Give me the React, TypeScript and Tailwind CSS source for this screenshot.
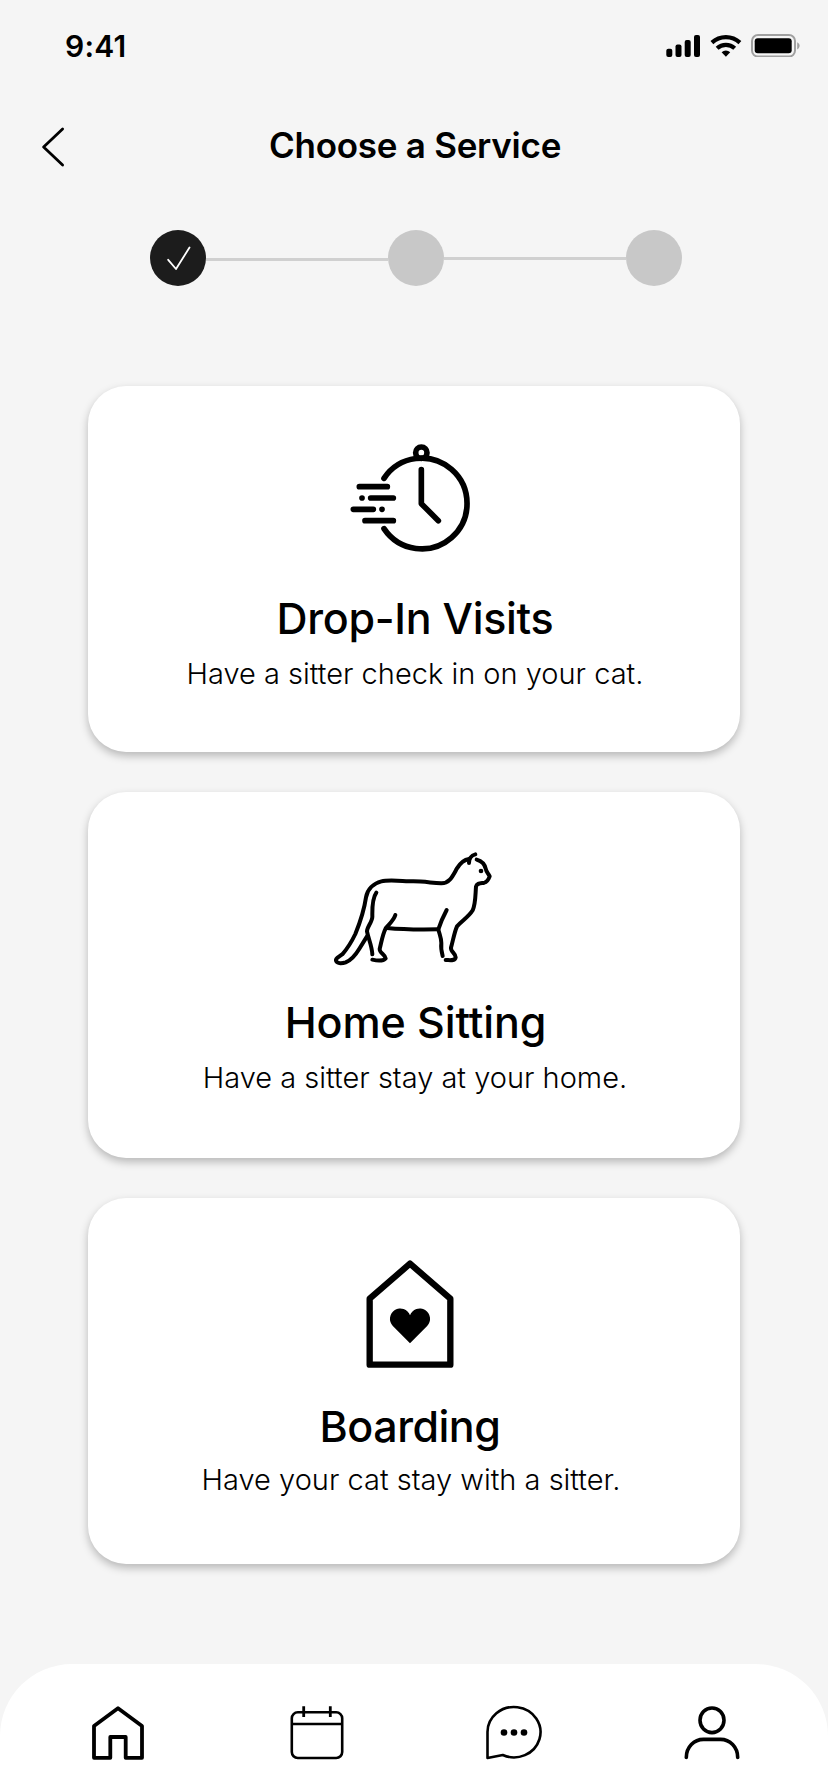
import React from "react";

const StatusBar = () => {
  return (
    <div className="flex h-[92px] items-start justify-between pl-[65px] pr-7">
      <span className="mt-7 text-[30px] leading-9 font-semibold tracking-[0.2px]">
        9:41
      </span>
      <div className="mt-[33px] flex items-start">
        <svg viewBox="0 0 35 24" className="h-6 w-[35px]" fill="currentColor">
          <rect x="0.3" y="15.7" width="6" height="8.3" rx="2" />
          <rect x="9.5" y="11.5" width="6" height="12.5" rx="2" />
          <rect x="18.7" y="7" width="6" height="17" rx="2" />
          <rect x="28" y="2" width="6" height="22" rx="2" />
        </svg>
        <svg
          viewBox="0 0 32 24"
          className="ml-[9px] h-6 w-8"
          fill="none"
          stroke="currentColor"
          strokeWidth="4.2"
        >
          <path d="M1.9 9.6a20.6 20.6 0 0 1 28 0" />
          <path d="M7.1 15.2a13.2 13.2 0 0 1 17.6 0" />
          <path
            d="M11.6 19.2a6.6 6.6 0 0 1 8.6 0L15.9 23.8z"
            fill="currentColor"
            stroke="none"
          />
        </svg>
        <svg viewBox="0 0 50 24" className="ml-2 h-6 w-[50px]">
          <rect
            x="2"
            y="2"
            width="43"
            height="21.6"
            rx="6"
            fill="none"
            stroke="#a0a0a0"
            strokeWidth="2"
          />
          <rect x="4.7" y="5.3" width="37" height="15" rx="3" />
          <path d="M47.2 9.2c3.2 1.5 3.2 5.7 0 7.4z" fill="#a0a0a0" />
        </svg>
      </div>
    </div>
  );
};

const Header = () => {
  return (
    <header className="flex h-[110px] items-center pl-10">
      <svg
        viewBox="0 0 27 42"
        className="h-[42px] w-[27px]"
        fill="none"
        stroke="currentColor"
        strokeWidth="2.8"
        strokeLinecap="round"
        strokeLinejoin="round"
      >
        <path d="M22.6 3L3.6 21l19 18" />
      </svg>
      <h1 className="mb-[5px] flex-1 pr-[65px] text-center text-[35px] leading-[44px] font-semibold tracking-[-0.25px]">
        Choose a Service
      </h1>
    </header>
  );
};

const Steps = () => {
  return (
    <div className="mt-7 flex h-14 items-center pl-[150px]">
      <div className="flex h-14 w-14 items-center justify-center rounded-full bg-[#1c1c1c]">
        <svg
          viewBox="0 0 28 28"
          className="h-7 w-7"
          fill="none"
          stroke="white"
          strokeWidth="1.8"
          strokeLinecap="round"
          strokeLinejoin="round"
        >
          <path d="M4.2 15.8L12 25 25.5 3.5" />
        </svg>
      </div>
      <div className="mt-0.5 h-[3px] w-[182px] bg-[#d0d0d0]" />
      <div className="h-14 w-14 rounded-full bg-[#c8c8c8]" />
      <div className="h-[3px] w-[182px] bg-[#d0d0d0]" />
      <div className="h-14 w-14 rounded-full bg-[#c8c8c8]" />
    </div>
  );
};

const ClockIcon = () => {
  return (
    <svg
      viewBox="0 0 540 450"
      className="mt-[34px] mr-2 h-[150px] w-[180px]"
      fill="none"
      stroke="currentColor"
      strokeWidth="17"
      strokeLinecap="round"
      strokeLinejoin="round"
    >
      <path d="M192 175A136 136 0 1 1 192 326" />
      <circle cx="304" cy="98" r="17" />
      <path d="M304 149V251L355 302" />
      <path d="M118 200H202M126 234H126.1M152 234H220M100 268H160M186 268H186.1M135 302H220" />
    </svg>
  );
};

const CatIcon = () => {
  return (
    <svg
      viewBox="0 0 570 450"
      className="mt-[43px] ml-0.5 h-[150px] w-[190px]"
      fill="none"
      stroke="currentColor"
      strokeWidth="12"
      strokeLinecap="round"
      strokeLinejoin="round"
    >
      <path d="M447 84C447 73 453 61 466 58" />
      <path d="M447 72C428 75 419 87 411 100C399 121 389 146 363 145C332 143 309 139 280 139C250 139 208 133 184 139C160 145 142 163 138 187C132 228 117 270 106 297C95 320 80 343 67 358C58 366 46 367 48 377C52 388 69 385 77 382C94 375 109 356 118 341L141 304" />
      <path d="M470 74C484 78 494 87 497 101C499 111 505 115 509 124C506 132 502 141 493 143C481 145 470 144 468 155C466 180 467 207 458 226C446 246 426 257 411 274C403 292 399 317 393 338C391 350 407 355 407 367C405 379 389 375 377 375" />
      <path d="M169 173C155 193 157 222 157 245C157 260 141 276 141 289C145 311 156 333 157 358" />
      <path d="M226 240C221 257 207 267 197 280C187 300 184 323 179 342C178 354 196 359 197 370C190 378 170 377 157 374" />
      <path d="M201 279C252 284 304 284 355 283" />
      <path d="M380 225C371 242 361 264 355 283C359 300 364 309 364 324C362 340 365 351 368 363" />
      <circle cx="483" cy="108" r="7" fill="currentColor" stroke="none" />
    </svg>
  );
};

const HouseIcon = () => {
  return (
    <svg
      viewBox="0 0 450 450"
      className="mt-[42px] ml-0.5 h-[150px] w-[150px]"
      fill="none"
      stroke="currentColor"
      strokeWidth="19"
      strokeLinejoin="round"
    >
      <path d="M210 71L331 176V374H89V176z" />
      <path
        d="M210 310L158.5 258A31 31 0 1 1 210 226A31 31 0 1 1 261.5 258z"
        fill="currentColor"
        stroke="none"
      />
    </svg>
  );
};

const Card = ({ children }: { children: React.ReactNode }) => {
  return (
    <button className="flex h-[366px] w-[652px] flex-col items-center rounded-[38px] bg-white shadow-[0_4px_8px_rgba(0,0,0,0.25)]">
      {children}
    </button>
  );
};

const NavBar = () => {
  return (
    <nav className="mt-[100px] flex h-32 items-start rounded-t-[72px] bg-white pt-10 pl-[90px]">
      <svg
        viewBox="0 0 56 60"
        className="h-[60px] w-14"
        fill="none"
        stroke="currentColor"
        strokeWidth="3.8"
        strokeLinejoin="round"
      >
        <path d="M28 4.3L52 22V53.8H35.7V33H20.3V53.8H4V22z" />
      </svg>
      <svg
        viewBox="0 0 56 60"
        className="ml-[143px] h-[60px] w-14"
        fill="none"
        stroke="currentColor"
        strokeWidth="2.6"
      >
        <rect x="2.8" y="8.3" width="50.4" height="45.7" rx="6" />
        <path d="M3 20H53" />
        <path d="M14.7 2.2V13M41.3 2.2V13" strokeWidth="2.8" />
      </svg>
      <svg
        viewBox="0 0 60 60"
        className="ml-[139px] h-[60px] w-[60px]"
        fill="none"
        stroke="currentColor"
        strokeWidth="2.6"
        strokeLinejoin="round"
      >
        <path d="M3.5 54V28.6A26.5 25.2 0 1 1 18.8 51z" />
        <g fill="currentColor" stroke="none">
          <circle cx="20" cy="28.5" r="3.3" />
          <circle cx="30" cy="28.5" r="3.3" />
          <circle cx="40" cy="28.5" r="3.3" />
        </g>
      </svg>
      <svg
        viewBox="0 0 60 60"
        className="ml-[138px] h-[60px] w-[60px]"
        fill="none"
        stroke="currentColor"
        strokeWidth="3.6"
        strokeLinecap="round"
      >
        <ellipse cx="30" cy="16.3" rx="12" ry="12.3" />
        <path d="M4.3 53.5C4.3 43 12 35.4 21.5 35.4H38.5C48 35.4 55.7 43 55.7 53.5" />
      </svg>
    </nav>
  );
};

const App = () => {
  return (
    <div className="h-[1792px] w-[828px] overflow-hidden bg-[#f5f5f5] font-['Inter',sans-serif] text-black">
      <StatusBar />
      <Header />
      <Steps />
      <main className="mt-[100px] flex flex-col items-center gap-10">
        <Card>
          <ClockIcon />
          <h2 className="mt-[22px] ml-0.5 text-[43px] leading-[52px] font-medium tracking-[-0.3px]">
            Drop-In Visits
          </h2>
          <p className="mt-2.5 ml-0.5 text-[29px] leading-10 font-light">
            Have a sitter check in on your cat.
          </p>
        </Card>
        <Card>
          <CatIcon />
          <h2 className="mt-[11px] ml-[3px] text-[43px] leading-[52px] font-medium tracking-[-0.1px]">
            Home Sitting
          </h2>
          <p className="mt-2.5 ml-0.5 text-[29px] leading-10 font-light">
            Have a sitter stay at your home.
          </p>
        </Card>
        <Card>
          <HouseIcon />
          <h2 className="mt-2.5 mr-2 text-[43px] leading-[52px] font-medium tracking-[-0.5px]">
            Boarding
          </h2>
          <p className="mt-2 mr-1.5 text-[29px] leading-10 font-light">
            Have your cat stay with a sitter.
          </p>
        </Card>
      </main>
      <NavBar />
    </div>
  );
};

export default App;
